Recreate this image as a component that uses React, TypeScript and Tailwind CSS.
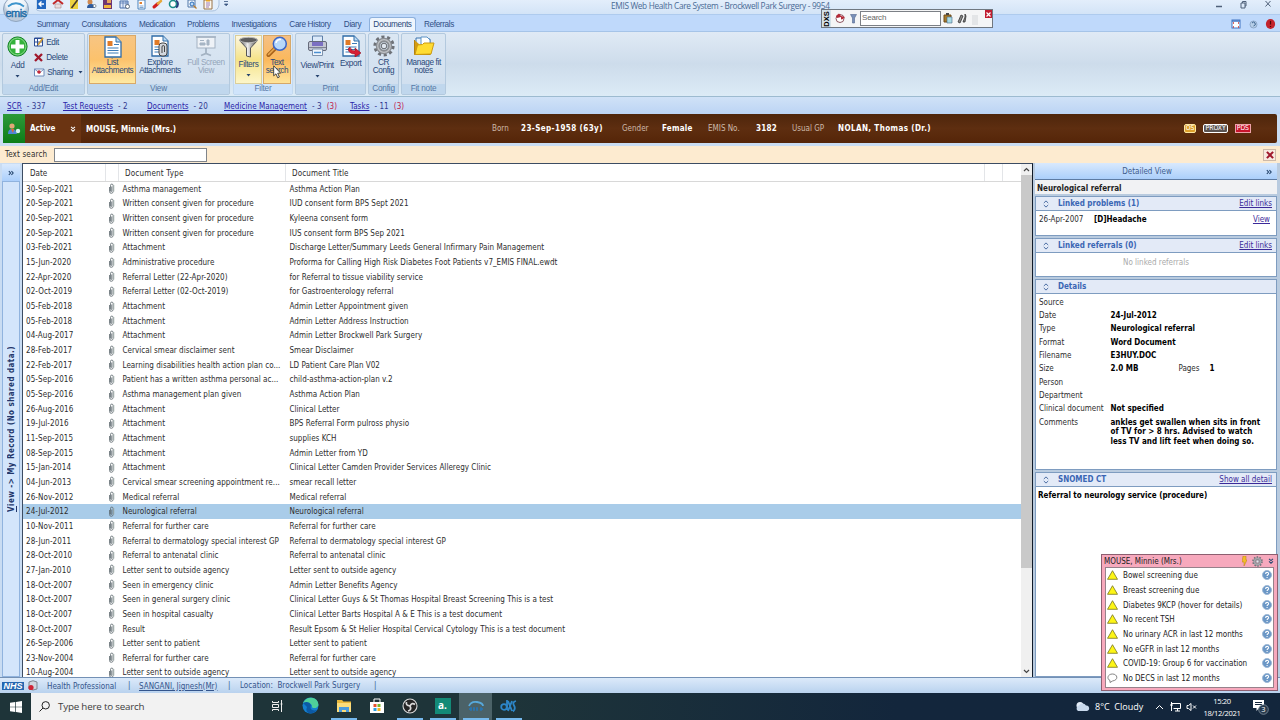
import React from "react"

type Doc = [date: string, type: string, title: string]

const docs: Doc[] = [
  ["30-Sep-2021", "Asthma management", "Asthma Action Plan"],
  ["20-Sep-2021", "Written consent given for procedure", "IUD consent form BPS Sept 2021"],
  ["20-Sep-2021", "Written consent given for procedure", "Kyleena consent form"],
  ["20-Sep-2021", "Written consent given for procedure", "IUS consent form BPS Sep 2021"],
  ["03-Feb-2021", "Attachment", "Discharge Letter/Summary Leeds General Infirmary Pain Management"],
  ["15-Jun-2020", "Administrative procedure", "Proforma for Calling High Risk Diabetes Foot Patients v7_EMIS FINAL.ewdt"],
  ["22-Apr-2020", "Referral Letter (22-Apr-2020)", "for Referral to tissue viability service"],
  ["02-Oct-2019", "Referral Letter (02-Oct-2019)", "for Gastroenterology referral"],
  ["05-Feb-2018", "Attachment", "Admin Letter Appointment given"],
  ["05-Feb-2018", "Attachment", "Admin Letter Address Instruction"],
  ["04-Aug-2017", "Attachment", "Admin Letter Brockwell Park Surgery"],
  ["28-Feb-2017", "Cervical smear disclaimer sent", "Smear Disclaimer"],
  ["22-Feb-2017", "Learning disabilities health action plan co...", "LD Patient Care Plan V02"],
  ["05-Sep-2016", "Patient has a written asthma personal ac...", "child-asthma-action-plan v.2"],
  ["05-Sep-2016", "Asthma management plan given", "Asthma Action Plan"],
  ["26-Aug-2016", "Attachment", "Clinical Letter"],
  ["19-Jul-2016", "Attachment", "BPS Referral Form pulross physio"],
  ["11-Sep-2015", "Attachment", "supplies KCH"],
  ["08-Sep-2015", "Attachment", "Admin Letter from YD"],
  ["15-Jan-2014", "Attachment", "Clinical Letter Camden Provider Services Alleregy Clinic"],
  ["04-Jun-2013", "Cervical smear screening appointment re...", "smear recall letter"],
  ["26-Nov-2012", "Medical referral", "Medical referral"],
  ["24-Jul-2012", "Neurological referral", "Neurological referral"],
  ["10-Nov-2011", "Referral for further care", "Referral for further care"],
  ["28-Jun-2011", "Referral to dermatology special interest GP", "Referral to dermatology special interest GP"],
  ["28-Oct-2010", "Referral to antenatal clinic", "Referral to antenatal clinic"],
  ["27-Jan-2010", "Letter sent to outside agency", "Letter sent to outside agency"],
  ["18-Oct-2007", "Seen in emergency clinic", "Admin Letter Benefits Agency"],
  ["18-Oct-2007", "Seen in general surgery clinic", "Clinical Letter Guys & St Thomas Hospital Breast Screening This is a test"],
  ["18-Oct-2007", "Seen in hospital casualty", "Clinical Letter Barts Hospital A & E This is a test document"],
  ["18-Oct-2007", "Result", "Result Epsom & St Helier Hospital Cervical Cytology This is a test document"],
  ["26-Sep-2006", "Letter sent to patient", "Letter sent to patient"],
  ["23-Nov-2004", "Referral for further care", "Referral for further care"],
  ["10-Aug-2004", "Letter sent to outside agency", "Letter sent to outside agency"],
]

const alerts = [
  "Bowel screening due",
  "Breast screening due",
  "Diabetes 9KCP (hover for details)",
  "No recent TSH",
  "No urinary ACR in last 12 months",
  "No eGFR in last 12 months",
  "COVID-19: Group 6 for vaccination",
  "No DECS in last 12 months",
]

const details: [string, string][] = [
  ["Source", ""],
  ["Date", "24-Jul-2012"],
  ["Type", "Neurological referral"],
  ["Format", "Word Document"],
  ["Filename", "E3HUY.DOC"],
  ["Size", "2.0 MB"],
  ["Person", ""],
  ["Department", ""],
  ["Clinical document", "Not specified"],
]

const tabs: { label: string; className: string }[] = [
  { label: "Summary", className: "w-[46px]" },
  { label: "Consultations", className: "w-[56px]" },
  { label: "Medication", className: "w-[50px]" },
  { label: "Problems", className: "w-[42px]" },
  { label: "Investigations", className: "w-[60px]" },
  { label: "Care History", className: "w-[52px]" },
  { label: "Diary", className: "w-[33px]" },
  { label: "Documents", className: "w-[47px]" },
  { label: "Referrals", className: "w-[46px]" },
]

/* ---------- icons ---------- */

function Page({ size = 22, children }: { size?: number; children?: React.ReactNode }) {
  return (
    <svg width={size} height={size} viewBox="0 0 22 22">
      <path d="M3 1h11l5 5v15H3z" fill="#fff" stroke="#2f6ca8" strokeWidth="1.3" />
      <path d="M14 1v5h5" fill="#bcd9f2" stroke="#2f6ca8" />
      <rect x="5.500" y="5" width="5" height="5" fill="#e07b28" />
      <path d="M12 8.500h5M5.500 12h11M5.500 14.500h11M5.500 17h11" stroke="#3d7cb8" strokeWidth="1.100" />
      {children}
    </svg>
  )
}

function AddIcon() {
  return (
    <svg width="21" height="21" viewBox="0 0 21 21">
      <circle cx="10.500" cy="10.500" r="9.600" fill="#35b23c" stroke="#17822a" />
      <circle cx="10.500" cy="10.500" r="8.400" fill="none" stroke="#9be09a" strokeWidth=".8" />
      <path d="M8.500 4h4v4.500H17v4h-4.500V17h-4v-4.500H4v-4h4.500z" fill="#fff" />
    </svg>
  )
}

function ScreenIcon() {
  return (
    <svg width="22" height="22" viewBox="0 0 22 22" fill="none" stroke="#a3b2c2">
      <rect x="2" y="2" width="18" height="11" fill="#eef2f7" />
      <path d="M11 13v5M6 20.500l5-2 5 2" strokeWidth="1.800" />
      <path d="M5 10V8h5v2zM12 5h2v5h-2z" fill="#aab8c6" />
      <path d="M5 5.500h4" />
      <path d="M1 2h20" strokeWidth="1.500" />
    </svg>
  )
}

function FunnelIcon() {
  return (
    <svg width="21" height="22" viewBox="0 0 21 22">
      <defs>
        <linearGradient id="funnel">
          <stop offset="0" stopColor="#444" />
          <stop offset=".45" stopColor="#eee" />
          <stop offset="1" stopColor="#444" />
        </linearGradient>
      </defs>
      <path d="M1.500 4.500 8.500 12v8l4 1V12l7-7.500z" fill="url(#funnel)" stroke="#555" />
      <ellipse cx="10.500" cy="4" rx="9" ry="2.700" fill="#5d5d5d" stroke="#bbb" />
    </svg>
  )
}

function MagnifierIcon() {
  return (
    <svg width="22" height="22" viewBox="0 0 22 22">
      <path d="M9 12.500 2.500 19" stroke="#a9641a" strokeWidth="4" strokeLinecap="round" />
      <path d="M9 12 2.500 18.500" stroke="#e9a950" strokeWidth="1.600" strokeLinecap="round" />
      <circle cx="13.800" cy="7.800" r="6.500" fill="#b7d8fb" stroke="#3b66c8" strokeWidth="1.500" />
      <path d="M10 7a4 4 0 0 1 5-3.400" stroke="#fff" strokeWidth="1.600" fill="none" />
    </svg>
  )
}

function PrinterIcon() {
  return (
    <svg width="21" height="22" viewBox="0 0 21 22">
      <path d="M5.500 1h10v7h-10z" fill="#dceafa" stroke="#5d7fa8" />
      <rect x="1.500" y="6.500" width="18" height="9" rx="1.500" fill="#c3c7d3" stroke="#666b7b" />
      <rect x="5" y="7" width="11" height="4" fill="#7b70c2" />
      <path d="M2 12.500h17" stroke="#7d8292" />
      <path d="M5.500 14h10v6.500h-10z" fill="#f0f6fd" stroke="#7f93ad" />
      <path d="M7 17.500h7" stroke="#4b8fd0" strokeWidth="1.500" />
    </svg>
  )
}

function GearIcon({ size = 22 }: { size?: number }) {
  return (
    <svg width={size} height={size} viewBox="0 0 22 22">
      <circle cx="11" cy="11" r="8.900" fill="none" stroke="#6d7177" strokeWidth="3.400" strokeDasharray="3 2.592" />
      <circle cx="11" cy="11" r="6" fill="none" stroke="#8a8e93" strokeWidth="4.500" />
      <circle cx="11" cy="11" r="6.300" fill="none" stroke="#c0c3c7" strokeWidth="1.200" />
      <circle cx="11" cy="11" r="2.800" fill="#dfe6ef" stroke="#63676c" />
    </svg>
  )
}

function FolderIcon() {
  return (
    <svg width="22" height="22" viewBox="0 0 22 22">
      <path d="M3 3h5l1 1h8v9H3z" fill="#e8f2fb" stroke="#3d74ae" />
      <path d="M8 2h6l3 3v6H8z" fill="#fff" stroke="#5d93c6" />
      <path d="M1.500 5v14.500h16" fill="#d59b10" stroke="#b1810f" />
      <path d="M2 19.500 4.500 10l5-.5 1.500-1.500h10l-3 11z" fill="#ffdc32" stroke="#cc9a10" />
    </svg>
  )
}

function Clip() {
  return (
    <svg width="7" height="11" viewBox="0 0 7 11" fill="none" stroke="#59646b" strokeWidth=".8">
      <path d="M1.500 4v4.500a1.800 1.800 0 0 0 3.600 0V2.400a1.300 1.300 0 0 0-2.600 0V8a.6.6 0 0 0 1.200 0V3.500" />
      <path d="M5.800 2v6.500" stroke="#9aa8a5" />
    </svg>
  )
}

function RedCross({ size = 9 }: { size?: number }) {
  return (
    <svg width={size} height={size} viewBox="0 0 9 9" stroke="#a0182c" strokeWidth="2.300">
      <path d="M1 1l7 7M8 1 1 8" />
    </svg>
  )
}

function HelpBall() {
  return (
    <svg width="10" height="10" viewBox="0 0 10 10">
      <circle cx="5" cy="5" r="4.500" fill="#6b97c6" stroke="#9fb9d6" />
      <path d="M3.600 3.900c0-2 3-2 3-.2 0 1.200-1.500 1-1.500 2.300M5.100 7v1" stroke="#fff" fill="none" strokeWidth="1.100" />
    </svg>
  )
}

function Caret() {
  return (
    <svg width="5" height="3" viewBox="0 0 5 3">
      <path d="M.5 0h4L2.500 2.600z" fill="#26436e" />
    </svg>
  )
}

function Chevrons({ dir, color = "#27476f" }: { dir: "right" | "down"; color?: string }) {
  return (
    <svg width="6" height="6" viewBox="0 0 7 7" fill="none" stroke={color} strokeWidth="1.300">
      <path d={dir === "right" ? "M1 1.200 3 3.500 1 5.800M4 1.200 6 3.500 4 5.800" : "M1.200 1 3.500 3 5.800 1M1.200 4 3.500 6 5.800 4"} />
    </svg>
  )
}

function UpDown() {
  return (
    <svg width="6" height="8" viewBox="0 0 6 8" fill="none" stroke="#4b6da3">
      <path d="M.8 3 3 .9 5.200 3M.8 5 3 7.100 5.200 5" />
    </svg>
  )
}

/* ---------- title bar ---------- */

function QuickAccess() {
  return (
    <svg width="205" height="13" viewBox="36 0 205 13" className="ml-9">
      <path d="M36 0v8q0 3 4 3h172q6 0 7-6V0" fill="#e4effb" stroke="#a9c1de" />
      <rect x="37" y="0" width="9" height="9" fill="#2268c0" />
      <path d="M44 4h-5M41.500 1.500 39 4l2.500 2.500" stroke="#fff" strokeWidth="1.400" fill="none" />
      <path d="M53 4 58 0l5 4" stroke="#c22a2a" strokeWidth="2" fill="none" />
      <path d="M55 4h6v4h-6z" fill="#e9dede" stroke="#a88" strokeWidth=".6" />
      <path d="M70 0h8v9h-8z" fill="#ecd23f" />
      <path d="m71.500 8 6-8" stroke="#40362b" strokeWidth="1.600" />
      <circle cx="90" cy="2" r="2.500" fill="#d08a50" />
      <path d="M87 8q0-4 4-4t4 4z" fill="#2d5b9d" />
      <circle cx="94.500" cy="6" r="1.500" fill="#fff" stroke="#456" strokeWidth=".6" />
      <path d="M103 0h9v9h-9z" fill="#6d3573" />
      <path d="M104 5h7v3h-7z" fill="#f0b43c" />
      <path d="M107 0h4v3h-4z" fill="#e7a25c" />
      <path d="M120 1h8v7h-8z" fill="#dfeafa" stroke="#496fa9" />
      <path d="M120 3h8M123 1v7M126 1v7" stroke="#496fa9" strokeWidth=".7" />
      <circle cx="127.500" cy="6.500" r="2" fill="#fff" stroke="#345" strokeWidth=".7" />
      <path d="M138 0h7v9h-7z" fill="#fff" stroke="#4b83bc" />
      <path d="M139.500 2h2.500v2h-2.500z" fill="#e08030" />
      <path d="M139.500 6h4M139.500 7.500h4" stroke="#4b83bc" strokeWidth=".7" />
      <path d="m154 7 4-3.500" stroke="#d21f1f" strokeWidth="3" strokeLinecap="round" />
      <path d="m158 3.500 3-2.500" stroke="#e7a93c" strokeWidth="2.500" strokeLinecap="round" />
      <circle cx="173" cy="4" r="3.500" fill="#fff" stroke="#1b8c87" strokeWidth="1.600" />
      <path d="M176 .5a4 4 0 0 1 0 7" stroke="#283a7c" strokeWidth="1.800" fill="none" />
      <path d="M188 0h7v7h-7z" fill="#eef5fd" stroke="#5379a8" />
      <circle cx="192" cy="4" r="2" fill="#b8dafa" stroke="#2d6bb5" />
      <path d="m193.500 5.500 3 3" stroke="#bb7c2b" strokeWidth="1.300" />
      <path d="M204 0h8v9h-8z" fill="#fcf7ee" stroke="#987246" />
      <path d="M206 3h4M206 5h4M206 7h3" stroke="#855ca6" strokeWidth=".8" />
      <path d="M206 0h4v1.500h-4z" fill="#e6a327" />
      <path d="M224 1.500h4M224.500 4h3.400l-1.700 1.800z" stroke="#3b5782" strokeWidth=".8" fill="#3b5782" />
    </svg>
  )
}

function EmisLogo() {
  return (
    <svg className="absolute left-[2px] top-[-5px]" width="28" height="28" viewBox="0 0 28 28">
      <defs>
        <radialGradient id="orb" cy=".25">
          <stop offset="0" stopColor="#fff" />
          <stop offset=".8" stopColor="#e8eff6" />
          <stop offset="1" stopColor="#bccbdc" />
        </radialGradient>
      </defs>
      <circle cx="14" cy="14" r="12.500" fill="url(#orb)" stroke="#8fa5bf" />
      <path d="M6 11.500Q14 5 22 11.500" fill="none" stroke="#3f95cc" strokeWidth="1.700" />
      <text x="14" y="21.500" textAnchor="middle" fontSize="11" fontFamily="Liberation Sans, sans-serif" letterSpacing="-.5" stroke="#1c6ba8" strokeWidth=".4" fill="#1c6ba8">emis</text>
    </svg>
  )
}

function TitleBar() {
  return (
    <div className="flex h-[14px] items-start bg-linear-to-b from-[#e3eefb] to-[#d3e4f7] text-[#4a6a95]">
      <QuickAccess />
      <div className="w-[370px]" />
      <div className="w-[220px] pt-px font-[Open_Sans,sans-serif] text-[8.300px] leading-[9px] tracking-[-0.330px] whitespace-nowrap [font-stretch:normal]">EMIS Web Health Care System - Brockwell Park Surgery - 9954</div>
      <svg className="ml-auto mr-[4px]" width="60" height="10" viewBox="0 0 60 10" fill="none" stroke="#4f6079">
        <path d="M0 6.500h6" strokeWidth="1.500" />
        <path d="M25 3h4v5h-4zM26.500 3V1.500H30V6h-1M49.500 1l5 5.500M54.500 1l-5 5.500" />
      </svg>
    </div>
  )
}

function DxsBar() {
  return (
    <div className="absolute left-[821px] top-[9px] flex h-[19px] w-[172px] items-center border border-[#6f7780] bg-[#f4f5f6]">
      <div className="flex h-full w-[9px] items-center justify-center bg-[#d3e1e8]">
        <span className="-rotate-90 font-[Liberation_Sans,sans-serif] text-[7.500px] font-bold text-black">DXS</span>
      </div>
      <svg width="20" height="11" viewBox="0 0 20 11" className="ml-[3px]">
        <circle cx="6" cy="5.500" r="4" fill="#fff" stroke="#8e5560" strokeWidth="1" />
        <path d="M2 3 5 .5l2 2.500 4 1-2 2-2 .5V4L3 5z" fill="#b52b38" />
      </svg>
      <svg width="7" height="11" viewBox="0 0 7 11" className="-ml-[4px]">
        <path d="M.5 1.500h6L4.500 5v5h-2V5z" fill="#7a90b8" stroke="#51678f" strokeWidth=".6" />
      </svg>
      <div className="ml-[3px] h-[15px] w-[81px] border border-[#7c8086] bg-white pl-px font-[Liberation_Sans,sans-serif] text-[8px] leading-[12px] tracking-[-0.200px] text-[#666]">Search</div>
      <svg width="30" height="13" viewBox="0 0 30 13" className="ml-[2px]">
        <path d="M1 3h7v7H1z" fill="#a67a2c" stroke="#6e4b18" />
        <path d="M3 1h3v2H3z" fill="#444" />
        <path d="M4 5h5v6H4z" fill="#a9dbe4" stroke="#468" strokeWidth=".6" />
        <path d="m15 10 3-7 2 1-3 7zM20 10l2-5 0-3 1 2-1 6z" fill="#888" stroke="#333" strokeWidth=".8" />
      </svg>
      <div className="absolute right-0 top-0 flex h-[8px] w-[7px] items-center justify-center bg-[#c01c30]">
        <svg width="5" height="5" viewBox="0 0 5 5" stroke="#fff" strokeWidth="1.200"><path d="m.5.5 4 4m0-4-4 4" /></svg>
      </div>
      <div className="-ml-px mt-[3px] h-[10px] w-[6px] bg-[#e3e5e7]" />
    </div>
  )
}

function TabRow() {
  return (
    <div className="flex h-[17px] border-t border-[#aecbee] bg-[#bfd9fb] pl-[30px] font-[Liberation_Sans,sans-serif] text-[8.200px] tracking-[-0.350px] text-[#2f4f86]">
      {tabs.map((t) => (
        <div
          key={t.label}
          className={`${t.className} flex items-center justify-center whitespace-nowrap pt-[3px] ${
            t.label === "Documents" ? "mt-[2px] rounded-t-[3px] border border-b-0 border-[#8db0dc] bg-[#eef5fd] pt-0 pb-[2px] text-[#2a4878]" : ""
          }`}
        >
          {t.label}
        </div>
      ))}
      <svg className="ml-auto mr-[2px] mt-[4px]" width="48" height="11" viewBox="0 0 48 11">
        <rect x="2" y="1" width="8" height="8" fill="#fff" stroke="#4175c2" />
        <path d="M2 2h8" stroke="#4175c2" strokeWidth="1.500" />
        <path d="M3 4h1M8 4h1M3 8h1M8 8h1" stroke="#c33" strokeWidth="1.300" />
        <circle cx="23.500" cy="5.500" r="3.500" fill="#b7cfe8" stroke="#8fa9c9" />
        <path d="M22 4q1.500-2 3 0T23.500 7" stroke="#3b638f" fill="none" />
        <ellipse cx="40.500" cy="5" rx="4.600" ry="5" fill="#c2232c" />
        <path d="M40.500 2v3.500M40.500 7v1" stroke="#4d0606" strokeWidth="1.200" />
      </svg>
    </div>
  )
}

/* ---------- ribbon ---------- */

function Group({ label, className, active, children }: { label: string; className: string; active?: boolean; children: React.ReactNode }) {
  return (
    <div className={`${className} flex h-[62px] flex-col rounded-[2px] border ${active ? "border-[#c2d9f0] bg-[#dfedfb]" : "border-[#b3c9de] bg-linear-to-b from-[#dbe7f3] to-[#cfdeee]"}`}>
      <div className="flex min-h-0 flex-1 px-px pt-px">{children}</div>
      <div className={`h-[10px] text-center leading-[10px] tracking-[-0.200px] text-[#5577a5] ${active ? "bg-[#cfe4fb]" : "bg-[#c0d7ed]"}`}>{label}</div>
    </div>
  )
}

function BigButton({ icon, lines, className = "", caret }: { icon: React.ReactNode; lines: string[]; className?: string; caret?: boolean }) {
  return (
    <div className={`flex h-[49px] flex-col items-center whitespace-nowrap ${className}`}>
      <div className="flex h-[22px] items-center">{icon}</div>
      <div className="mt-[1px] text-center leading-[8px]">
        {lines.map((l) => (
          <div key={l}>{l}</div>
        ))}
      </div>
      {caret && <div className="mt-auto mb-[6px]"><Caret /></div>}
    </div>
  )
}

function Ribbon() {
  return (
    <div className="flex h-[66px] gap-[2px] border-t border-b border-t-[#a6c4e8] border-b-[#9dbbd0] bg-linear-to-b from-[#e0eaf5] via-[#cddceb] to-[#dcebf6] pl-[2px] pt-px font-[Liberation_Sans,sans-serif] text-[8.200px] tracking-[-0.350px] text-[#294878]">
      <Group label="Add/Edit" className="w-[83px]">
        <BigButton icon={<AddIcon />} lines={["Add"]} className="w-[29px] [&>div:nth-child(2)]:pt-[4px]" caret />
        <div className="flex flex-col gap-[6px] pl-[3px] pt-[2px] leading-[9px]">
          <div className="flex items-center gap-[2px]">
            <svg width="10" height="10" viewBox="0 0 10 10"><path d="M.5 1h8v8h-8z" fill="#fff" stroke="#2b4c96" /><path d="M0 1.500h9M3.500 1v8M.5 5h8" stroke="#2b4c96" /><path d="m4 8 5-7" stroke="#d09a35" strokeWidth="1.600" /></svg>
            Edit
          </div>
          <div className="flex items-center gap-[3px]"><RedCross />Delete</div>
          <div className="flex items-center gap-[2px]">
            <svg width="11" height="9" viewBox="0 0 11 9"><path d="M.5 1h9.500v7H.5z" fill="#fff" stroke="#708dbb" /><path d="m.5 1 5 4 4.500-4" fill="none" stroke="#708dbb" /><circle cx="5" cy="4" r="1.800" fill="#c42838" /></svg>
            Sharing
            <span className="ml-[3px]"><Caret /></span>
          </div>
        </div>
      </Group>
      <Group label="View" className="w-[143px]">
        <BigButton icon={<Page />} lines={["List", "Attachments"]} className="w-[47px] border border-[#d9a968] bg-linear-to-b from-[#f7c583] via-[#fcc26c] to-[#fee9a2]" />
        <BigButton
          icon={<Page><rect x="10" y="8" width="8" height="13" rx="3" fill="#d3d8de" stroke="#444" /><path d="M13 18v-6q0-1.500 1.300-1.500T15.500 12v5" stroke="#444" fill="none" /></Page>}
          lines={["Explore", "Attachments"]}
          className="w-[48px] [&>div:nth-child(2)]:pt-px"
        />
        <BigButton icon={<ScreenIcon />} lines={["Full Screen", "View"]} className="w-[44px] text-[#94a5ba] [&>div:nth-child(2)]:pt-px" />
      </Group>
      <Group label="Filter" className="ml-px w-[60px]" active>
        <BigButton icon={<FunnelIcon />} lines={["Filters"]} className="mr-px w-[27px] border border-[#dccf9a] bg-linear-to-b from-[#fcf6df] via-[#f5e388] to-[#fdf6c9] [&>div:nth-child(2)]:pt-[2px]" caret />
        <BigButton icon={<MagnifierIcon />} lines={["Text", "search"]} className="w-[28px] border border-[#d6a869] bg-linear-to-b from-[#f5c083] via-[#fbb85c] to-[#fee49a]" />
      </Group>
      <Group label="Print" className="w-[71px]">
        <BigButton icon={<PrinterIcon />} lines={["View/Print"]} className="w-[41px] [&>div:nth-child(2)]:pt-[4px]" caret />
        <BigButton icon={<Page><path d="M10 12q1 4 5 4v-3l6 5-6 4v-3q-6 0-7-5z" fill="#d81d34" stroke="#8f1020" strokeWidth=".6" /></Page>} lines={["Export"]} className="w-[27px] [&>div:nth-child(2)]:pt-[2px]" />
      </Group>
      <Group label="Config" className="w-[31px]">
        <BigButton icon={<GearIcon />} lines={["CR", "Config"]} className="w-[28px] [&>div:nth-child(2)]:pt-px" />
      </Group>
      <Group label="Fit note" className="w-[45px]">
        <BigButton icon={<FolderIcon />} lines={["Manage fit", "notes"]} className="w-[42px] [&>div:nth-child(2)]:pt-px" />
      </Group>
    </div>
  )
}

function LinkCount({ label, count, overdue, className }: { label: string; count: number; overdue?: number; className: string }) {
  return (
    <div className={`${className} whitespace-nowrap`}>
      <a className="underline">{label}</a>
      <span className="pl-[5px] text-[#33388e]">- {count}</span>
      {overdue && <span className="pl-[5px] text-[#c2204a]">({overdue})</span>}
    </div>
  )
}

function LinkBar() {
  return (
    <div className="flex h-[17px] items-center bg-linear-to-b from-[#d0e2f7] to-[#bcd4f4] pl-[7px] pt-[3px] tracking-[0.060px] text-[#2a23a8]">
      <LinkCount label="SCR" count={337} className="w-[56px]" />
      <LinkCount label="Test Requests" count={2} className="w-[84px]" />
      <LinkCount label="Documents" count={20} className="w-[77px]" />
      <LinkCount label="Medicine Management" count={3} overdue={3} className="w-[126px]" />
      <LinkCount label="Tasks" count={11} overdue={3} className="w-[70px]" />
    </div>
  )
}

function PatientBanner() {
  return (
    <div className="mx-[3px] flex h-[29px] items-center rounded-[2px] bg-linear-to-b from-[#4e260c] via-[#5e2e10] to-[#552508] font-bold text-white">
      <div className="flex h-full w-[22px] items-center justify-center bg-linear-to-b from-[#2c9a38] to-[#0b7d18]">
        <svg width="14" height="12" viewBox="0 0 14 12">
          <circle cx="5" cy="3" r="2.600" fill="#e3a878" />
          <path d="M1 11q0-5 4-5t5 5z" fill="#4f86d9" />
          <path d="M4 6h3l-1 4z" fill="#e7672c" />
          <circle cx="11" cy="8" r="2.200" fill="#d7f3f0" />
        </svg>
      </div>
      <div className="flex h-full w-[56px] items-center justify-between bg-[#6b3412] pl-[5px] pr-[5px]">Active <Chevrons dir="down" color="#fff" /></div>
      <div className="w-[411px] pl-[5px] pt-[2px] tracking-[0.080px]">MOUSE, Minnie (Mrs.)</div>
      <div className="w-[29px] font-normal text-[#cdb9a9]">Born</div>
      <div className="w-[101px] tracking-[0.400px] whitespace-nowrap">23-Sep-1958 (63y)</div>
      <div className="w-[40px] font-normal text-[#cdb9a9]">Gender</div>
      <div className="w-[46px] tracking-[0.250px]">Female</div>
      <div className="w-[48px] font-normal text-[#cdb9a9]">EMIS No.</div>
      <div className="w-[36px] tracking-[0.250px]">3182</div>
      <div className="w-[46px] font-normal text-[#cdb9a9]">Usual GP</div>
      <div className="tracking-[0.400px]">NOLAN, Thomas (Dr.)</div>
      <div className="ml-auto mr-[26px] flex items-center gap-[7px] text-[6.800px] leading-[7px] font-normal">
        <span className="rounded-[2px] border border-[#ffe7a0] bg-[#dda02b] px-[1px]">OS</span>
        <span className="rounded-[2px] border border-white bg-[#5b5350] px-[1px]">PROXY</span>
        <span className="border border-[#eea1a8] bg-[#c8142c] px-px">PDS</span>
      </div>
    </div>
  )
}

/* ---------- document list ---------- */

function DocumentList() {
  return (
    <div className="flex w-[999px] flex-col border-t border-l border-[#3c4c63] bg-white">
      <div className="flex h-[18px] shrink-0 items-center border-b border-[#d8d8d8] [&>div]:flex [&>div]:h-full [&>div]:items-center [&>div]:border-r [&>div]:border-[#e3e5e8] [&>div]:pt-[2px]">
        <div className="w-[83px] pl-[7px]">Date</div>
        <div className="w-[13px]" />
        <div className="w-[167px] pl-[6px] tracking-[0.200px]">Document Type</div>
        <div className="w-[699px] pl-[6px] tracking-[0.120px]">Document Title</div>
        <div className="w-[18px]" />
      </div>
      <div className="min-h-0 flex-1 overflow-hidden">
        {docs.map(([date, type, title], i) => (
          <div key={i} className={`flex h-[14.667px] items-center whitespace-nowrap pl-[3px] pt-px ${i === 22 ? "bg-[#a9cce9]" : ""}`}>
            <div className="w-[82px] tracking-[0.080px]">{date}</div>
            <div className="-mt-[2px] w-[14.500px]"><Clip /></div>
            <div className="w-[167px] tracking-[0.030px]">{type}</div>
            <div className="tracking-[0.030px]">{title}</div>
          </div>
        ))}
      </div>
    </div>
  )
}

function ScrollBar() {
  return (
    <div className="flex w-[12px] flex-col items-center border-t border-r border-t-[#3c4c63] border-r-[#101a28] bg-[#f0f0f0]">
      <svg width="7" height="11" viewBox="0 0 7 11" fill="none" stroke="#444" strokeWidth="1.200"><path d="m1 7 2.500-2.500L6 7" /></svg>
      <div className="h-[393px] w-full bg-[#c9c9c9]" />
      <svg className="mt-auto" width="7" height="11" viewBox="0 0 7 11" fill="none" stroke="#444" strokeWidth="1.200"><path d="m1 4 2.500 2.500L6 4" /></svg>
    </div>
  )
}

/* ---------- detail panel ---------- */

function Section({ title, link, className, children }: { title: string; link?: string; className: string; children: React.ReactNode }) {
  return (
    <div className={`${className} border border-[#7e9cc0] bg-white`}>
      <div className="flex h-[14px] items-center border-b border-[#7e9cc0] bg-[#e3eaf7] pl-[7px] pr-[4px] pt-px font-bold text-[#3a66b4]">
        <UpDown />
        <span className="pl-[9px]">{title}</span>
        {link && <a className="ml-auto font-normal text-[#3c2a99] underline">{link}</a>}
      </div>
      {children}
    </div>
  )
}

function DetailPanel() {
  return (
    <div className="flex flex-1 flex-col gap-[2px] bg-[#b9cbdf] pl-[2px] pr-[3px]">
      <div>
        <div className="flex h-[17px] items-center border-b border-[#5d7ba3] bg-linear-to-b from-[#d9e9fd] to-[#abcffb] pr-[5px] pt-[2px] text-[#3d5c8c]">
          <div className="flex-1 pr-[7px] text-center">Detailed View</div>
          <Chevrons dir="right" />
        </div>
        <div className="h-[14px] bg-[#f1f2f4] pl-[2px] pt-[2px] font-bold leading-[14px] text-[#222]">Neurological referral</div>
      </div>
      <Section title="Linked problems (1)" link="Edit links" className="h-[40px]">
        <div className="flex items-center pl-[3px] pr-[4px] pt-[3px]">
          <span className="w-[55px]">26-Apr-2007</span>
          <b className="text-black">[D]Headache</b>
          <a className="ml-auto pr-[2px] text-[#3c2a99] underline">View</a>
        </div>
      </Section>
      <Section title="Linked referrals (0)" link="Edit links" className="h-[39px]">
        <div className="pt-[4px] text-center text-[#aaa]">No linked referrals</div>
      </Section>
      <Section title="Details" className="h-[191px]">
        <div className="pl-[3px] pt-[2px]">
          {details.map(([k, v]) => (
            <div key={k} className="flex h-[13.330px] items-center">
              <span className="w-[71.500px] whitespace-nowrap">{k}</span>
              <b className="text-black">{v}</b>
              {k === "Size" && (
                <>
                  <span className="ml-[40px] w-[31px]">Pages</span>
                  <b className="text-black">1</b>
                </>
              )}
            </div>
          ))}
          <div className="flex pt-[2px] leading-[9.500px]">
            <span className="w-[71.500px]">Comments</span>
            <b className="whitespace-nowrap text-black">
              ankles get swallen when sits in front
              <br />
              of TV for &gt; 8 hrs. Advised to watch
              <br />
              less TV and lift feet when doing so.
            </b>
          </div>
        </div>
      </Section>
      <Section title="SNOMED CT" link="Show all detail" className="min-h-0 flex-1">
        <div className="pl-[2px] pt-[3px] font-bold text-black">Referral to neurology service (procedure)</div>
      </Section>
    </div>
  )
}

function AlertBox() {
  return (
    <div className="absolute left-[1101px] top-[554px] h-[137px] w-[177px] border border-[#8d5f70] bg-[#f7a9bd] px-[3px] text-[#222]">
      <div className="-ml-[1px] flex h-[12px] items-center">
        <span className="flex-1 pt-[2px]">MOUSE, Minnie (Mrs.)</span>
        <svg width="5" height="10" viewBox="0 0 5 10"><path d="M1 0h3v4h1l-3 6V6H0z" fill="#f3bd28" stroke="#b67c14" strokeWidth=".5" /></svg>
        <span className="mx-[5px]"><GearIcon size={11} /></span>
        <Chevrons dir="down" />
      </div>
      <div className="h-[121px] border border-[#97818b] bg-white">
        {alerts.map((a, i) => (
          <div key={a} className="flex h-[14.667px] items-center pl-[1px] pr-[1px]">
            <svg width="11" height="10" viewBox="0 0 11 10">
              {i < 7 ? (
                <path d="M5.500.7 10.500 9.300H.5z" fill="#fdf516" stroke="#77751e" strokeWidth=".8" />
              ) : (
                <path d="M3 7.500C-.5 6 .5 1 5.500 1s6.500 6 0 7L3 9.500z" fill="#fff" stroke="#777" strokeWidth=".9" />
              )}
            </svg>
            <span className="flex-1 whitespace-nowrap pl-[5px] pt-[2px]">{a}</span>
            <HelpBall />
          </div>
        ))}
      </div>
    </div>
  )
}

/* ---------- bottom bars ---------- */

function StatusBar() {
  return (
    <div className="flex h-[16px] items-center border-t border-[#7390b5] bg-linear-to-b from-[#dceafa] to-[#b9d2ee] pl-[2px] whitespace-nowrap text-[#34558c]">
      <div className="w-[22px] bg-[#2566b0] text-center font-[Liberation_Sans,sans-serif] text-[9px] leading-[8px] font-bold text-white italic">NHS</div>
      <svg width="10" height="11" viewBox="0 0 10 11" className="ml-[4px]">
        <path d="M1 2q4-2.500 8 0v7q-4 2-8 0z" fill="#cfd6df" stroke="#7f8792" />
        <circle cx="3" cy="7.500" r="2.600" fill="#cf2436" />
      </svg>
      <span className="w-[80px] pl-[9px] pt-[2px]">Health Professional</span>
      <span className="w-[21px] pl-[10px] pt-px">|</span>
      <span className="w-[77px] pt-[2px] underline">SANGANI, Jignesh(Mr)</span>
      <span className="w-[13px] pl-[12px] pt-px">|</span>
      <span className="w-[132px] pl-[11px]">Location:&nbsp; Brockwell Park Surgery</span>
      <span className="pl-[13px] pt-px">|</span>
    </div>
  )
}

function Task({ active, open = true, children }: { active?: boolean; open?: boolean; children: React.ReactNode }) {
  return (
    <div className={`flex h-full w-[33px] flex-col items-center ${active ? "bg-[#4b6268]" : ""}`}>
      <div className="flex flex-1 items-center">{children}</div>
      <div className={`h-[2px] w-[26px] ${open ? "bg-[#76b9ed]" : ""}`} />
    </div>
  )
}

function Taskbar() {
  return (
    <div className="flex h-[27px] items-center bg-linear-to-r from-[#1e3439] from-40% to-[#13263c] to-70% font-[Open_Sans,sans-serif] text-white [font-stretch:normal]">
      <div className="flex w-[31px] justify-center">
        <svg width="12" height="12" viewBox="0 0 12 12" fill="#fff"><path d="M0 1.700 5.300 1v4.700H0zM6 .9 12 0v5.700H6zM0 6.300h5.300V11L0 10.300zM6 6.300h6V12l-6-.9z" /></svg>
      </div>
      <div className="flex h-full w-[222px] items-center bg-[#f2f2f2] pl-[8px] text-[9.800px] tracking-[-0.200px] text-[#3d3d3d]">
        <svg width="11" height="11" viewBox="0 0 11 11" fill="none" stroke="#222"><circle cx="6.700" cy="4.300" r="3.700" /><path d="M4 7 .5 10.500" /></svg>
        <span className="pl-[8px]">Type here to search</span>
      </div>
      <div className="ml-[8px] flex h-full">
        <Task open={false}>
          <svg width="11" height="12" viewBox="0 0 11 12" fill="none" stroke="#eee"><path d="M.5 1v1.500h6V1M.5 4.500h6v3h-6zM.5 11V9.500h6V11M9.500 0v12M8.500 4h2" /></svg>
        </Task>
        <Task open={false}>
          <svg width="17" height="17" viewBox="0 0 17 17">
            <circle cx="8.500" cy="8.500" r="8" fill="#1480d0" />
            <path d="M1 6Q4 0 10 .7q6 1 6.500 7-1 4-5.500 3.300-1.500-.5-1-2.500Q8 4.500 1 6" fill="#4fd09a" />
            <path d="M1 6q6-2.500 8 2-2 5 3.500 5.500L15 13q-3 4-8 3.300Q3 14.500 5 10" fill="#0c59a4" />
          </svg>
        </Task>
        <Task>
          <svg width="16" height="14" viewBox="0 0 16 14"><path d="M1 1h5l1.500 1.500H15V13H1z" fill="#e9b83c" /><path d="M1 4h14v9H1z" fill="#fbdc7a" /><path d="M3 13V8h10v5h-3v-2H6v2z" fill="#4b9bdd" /></svg>
        </Task>
        <Task open={false}>
          <svg width="16" height="16" viewBox="0 0 16 16"><path d="M5 4V1h6v3" fill="none" stroke="#fff" /><path d="M1 4h14v11H1z" fill="#fff" /><path d="M4.500 6h3v3h-3z" fill="#e8502e" /><path d="M8.500 6h3v3h-3z" fill="#7ab82b" /><path d="M4.500 10h3v3h-3z" fill="#2a9fe0" /><path d="M8.500 10h3v3h-3z" fill="#f4b520" /></svg>
        </Task>
        <Task>
          <svg width="16" height="16" viewBox="0 0 16 16"><circle cx="8" cy="8" r="7" fill="#252525" stroke="#d9d9d9" strokeWidth="1.100" /><path d="M8 8Q3.500 7.500 4.500 4M8 8q2-4 5-1.500M8 8q2 4-2 5" fill="none" stroke="#d9d9d9" strokeWidth="1.700" /></svg>
        </Task>
        <Task><div className="flex h-[16px] w-[16px] items-center justify-center bg-[#138a77] pb-[2px] text-[10px] font-bold">a.</div></Task>
        <Task active>
          <svg width="16" height="12" viewBox="0 0 16 12" fill="none"><path d="M1 6Q3 1 9 2t6 4" stroke="#57a9dc" strokeWidth="1.800" /><path d="M1 9h3M5 9h2M8 9h2M12 9h3M3 7v4M6 7v4M9 7v4M13 7v4" stroke="#2776b5" strokeWidth="1.300" /></svg>
        </Task>
        <Task>
          <svg width="17" height="14" viewBox="0 0 17 14" fill="none" stroke="#2d86c8" strokeWidth="1.800"><circle cx="4" cy="8" r="2.800" /><path d="M7 1v10M8 2l4 10M12 2 8 12M16 2q-4 1-2 4.500t-1 6" /></svg>
        </Task>
      </div>
      <div className="ml-auto flex h-full items-center text-[9px]">
        <svg width="15" height="11" viewBox="0 0 15 11" className="mr-[5px]"><circle cx="5" cy="4.500" r="3.500" fill="#e3edf8" /><path d="M3 10a3 3 0 0 1 1-5.500 4 4 0 0 1 7 0A2.800 2.800 0 0 1 12 10z" fill="#c8d9ec" /></svg>
        <span className="w-[58px] whitespace-nowrap">8°C&nbsp; Cloudy</span>
        <svg width="48" height="12" viewBox="0 0 48 12" fill="none" stroke="#fff">
          <path d="m3 8 3.500-3.500L10 8M18.500 2.500h9v5h-7M18.500 1v9M17 4h3M22 10h5M24.500 8v2M34 4.500h1.500L38 2.500v7l-2.500-2H34zM40 4.500l3 3M43 4.500l-3 3" />
        </svg>
        <div className="w-[42px] text-center text-[7.600px] leading-[12px] tracking-[-0.350px]">15:20<br />18/12/2021</div>
        <svg className="ml-[9px] mr-[11px]" width="17" height="16" viewBox="0 0 17 16">
          <path d="M1 1h11v8H7l-2.500 3V9H1z" fill="#fff" />
          <path d="M3 3.500h7M3 5.500h7" stroke="#13263c" />
          <circle cx="11.500" cy="10.500" r="4.800" fill="#273a4d" stroke="#93a0ad" strokeWidth=".7" />
          <text x="11.500" y="13.200" textAnchor="middle" fontSize="7.500" fill="#fff" fontFamily="Open Sans, sans-serif">3</text>
        </svg>
      </div>
    </div>
  )
}

export default function App() {
  return (
    <div className="relative flex h-[720px] w-[1280px] flex-col overflow-hidden bg-[#c9dcf2] font-['DejaVu_Sans_Condensed','DejaVu_Sans',sans-serif] text-[8px] leading-[12px] text-[#2d2d2d] [font-stretch:condensed]">
      <TitleBar />
      <TabRow />
      <Ribbon />
      <LinkBar />
      <PatientBanner />
      <div className="mt-[3px] flex h-[17px] items-center bg-[#fdebd0] pl-[5px] pr-[4px]">
        <span className="w-[49px] tracking-[0.150px]">Text search</span>
        <div className="h-[14px] w-[153px] border border-[#80858b] bg-white" />
        <div className="ml-auto flex h-[12px] w-[13px] items-center justify-center border border-[#cdb9a8] bg-[#f8e9df]"><RedCross size={8} /></div>
      </div>
      <div className="flex min-h-0 flex-1">
        <div className="flex w-[22px] flex-col pt-px pl-[2px] pr-[2px]">
          <div className="flex h-[17px] items-center justify-center bg-linear-to-b from-[#d9e9fd] to-[#abcffb]"><Chevrons dir="right" /></div>
          <div className="flex flex-1 items-center justify-center border border-[#90b3de] bg-[#d3e5fb]">
            <div className="rotate-180 pr-px font-bold tracking-[0.450px] whitespace-nowrap text-[#24386b] [writing-mode:vertical-rl]"><u>V</u>iew -&gt; My Record (No shared data.)</div>
          </div>
        </div>
        <DocumentList />
        <ScrollBar />
        <DetailPanel />
      </div>
      <StatusBar />
      <Taskbar />

      <EmisLogo />
      <DxsBar />
      <AlertBox />
      <svg className="absolute left-[273px] top-[65px]" width="9" height="14" viewBox="0 0 9 14"><path d="M.7.800v10l2.300-2 1.700 4 1.700-.8-1.700-3.800h3z" fill="#fff" stroke="#222" strokeWidth=".8" /></svg>
    </div>
  )
}
